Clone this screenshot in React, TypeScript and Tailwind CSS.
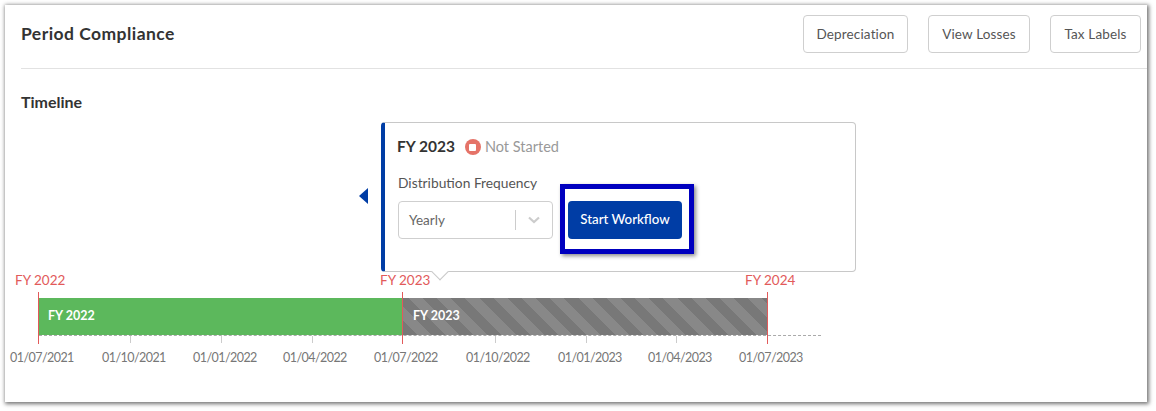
const font = "font-['Lato','Noto_Sans',sans-serif]";

const axisLabels = [
  { text: "01/07/2021", className: "left-[10px]" },
  { text: "01/10/2021", className: "left-[102px]" },
  { text: "01/01/2022", className: "left-[193px]" },
  { text: "01/04/2022", className: "left-[283px]" },
  { text: "01/07/2022", className: "left-[374px]" },
  { text: "01/10/2022", className: "left-[466px]" },
  { text: "01/01/2023", className: "left-[558px]" },
  { text: "01/04/2023", className: "left-[648px]" },
  { text: "01/07/2023", className: "left-[739px]" },
];
const ticks = ["left-[130px]", "left-[221px]", "left-[312px]", "left-[495px]", "left-[586px]", "left-[676px]"];
const markers = [
  { text: "FY 2022", label: "left-[15px]", line: "left-[38px]" },
  { text: "FY 2023", label: "left-[380px]", line: "left-[402px]" },
  { text: "FY 2024", label: "left-[745px]", line: "left-[767px]" },
];

function HeaderButton({ children, className }: { children: string; className: string }) {
  return (
    <button className={`h-[38px] rounded border border-[#cfcfcf] bg-white text-[13.5px] tracking-[0.15px] text-[#555] ${className}`}>
      {children}
    </button>
  );
}

export default function App() {
  return (
    <div className={`h-[411px] w-[1156px] bg-white pl-[5px] pt-[5px] ${font}`}>
      <div className="h-[397px] w-[1142px] bg-white pl-4 shadow-[1px_1px_4px_1px_rgba(0,0,0,0.55)]">
        <header className="flex h-[64px] items-center justify-between border-b border-[#e2e2e2] pb-[15px] pr-[6px] pt-[10px]">
          <h1 className="text-[17.5px] font-bold tracking-[0.45px] text-[#333]">Period Compliance</h1>
          <div className="flex gap-5">
            <HeaderButton className="w-[105px]">Depreciation</HeaderButton>
            <HeaderButton className="w-[102px]">View Losses</HeaderButton>
            <HeaderButton className="w-[91px]">Tax Labels</HeaderButton>
          </div>
        </header>

        <h2 className="mt-[24px] text-[16px] font-bold leading-[17px] text-[#333]">Timeline</h2>

        <div className="relative mt-[12px] flex">
          <div className="absolute left-[338px] top-[66px] h-0 w-0 border-y-[8px] border-r-[9px] border-y-transparent border-r-[#003da5]" />
          <section className="relative ml-[360px] h-[150px] w-[475px] rounded border border-l-4 border-[#c8c8c8] border-l-[#003da5] pl-[13px] pt-[13px]">
            <div className="-ml-px flex h-[22px] items-center">
              <span className="text-[15.5px] font-bold text-[#333]">FY 2023</span>
              <span className="ml-[10px] flex h-4 w-4 items-center justify-center rounded-full bg-[#e57368]">
                <span className="h-[7px] w-[7px] rounded-[1px] bg-white" />
              </span>
              <span className="ml-1 text-[14.5px] text-[#999]">Not Started</span>
            </div>
            <div className="mt-[17px] text-[13.8px] leading-[16px] text-[#555]">Distribution Frequency</div>
            <div className="mt-[10px] flex items-start">
              <div className="flex h-[38px] w-[155px] items-center rounded border border-[#cfcfcf] pl-[10px]">
                <span className="flex-1 text-[13.5px] text-[#666]">Yearly</span>
                <span className="h-5 w-px bg-[#ccc]" />
                <svg viewBox="0 0 12 8" className="mx-[12px] h-2 w-3" fill="none" stroke="#ccc" strokeWidth="2.2">
                  <path d="M1 1.500 6 6l5-4.500" />
                </svg>
              </div>
              <div className="-mt-[17px] ml-[7px] box-border flex h-[70px] w-[134px] items-start border-[5px] border-[#0000bf] pl-[3px] pt-[12px] shadow-[2px_2px_4px_rgba(0,0,0,0.45)]">
                <button className="h-[38px] w-[114px] rounded bg-[#003da5] text-[13.3px] font-medium text-white">
                  Start Workflow
                </button>
              </div>
            </div>
            <div className="absolute bottom-[-7px] left-[49px] h-3 w-3 rotate-45 border-b border-r border-[#c8c8c8] bg-white" />
          </section>
        </div>

        <div className="relative -ml-[21px] h-[120px]">
          {markers.map((m) => (
            <span key={m.text} className={`absolute top-0 text-[13.5px] leading-[16px] text-[#e25a5a] ${m.label}`}>
              {m.text}
            </span>
          ))}
          <div className="absolute left-[39px] top-[26px] flex h-[37px]">
            <div className="flex h-full w-[363px] items-center bg-[#5cb85c] pl-[9px] text-[12.5px] font-bold text-white">FY 2022</div>
            <div className="ml-px flex h-full w-[364px] items-center bg-[repeating-linear-gradient(45deg,#787878_0,#787878_10px,#888_10px,#888_20px)] pl-[10px] text-[12.5px] font-bold text-white">
              FY 2023
            </div>
          </div>
          <div className="absolute left-[39px] top-[63px] w-[782px] border-t border-dashed border-[#aaa]" />
          {ticks.map((t) => (
            <div key={t} className={`absolute top-[64px] h-[7px] w-px bg-[#ccc] ${t}`} />
          ))}
          {markers.map((m) => (
            <div key={m.line} className={`absolute top-[20px] h-[52px] w-px bg-[#e25a5a] ${m.line}`} />
          ))}
          {axisLabels.map((a) => (
            <span key={a.text} className={`absolute top-[78px] text-[12.5px] leading-[16px] tracking-[-0.55px] text-[#777] ${a.className}`}>
              {a.text}
            </span>
          ))}
        </div>
      </div>
    </div>
  );
}
